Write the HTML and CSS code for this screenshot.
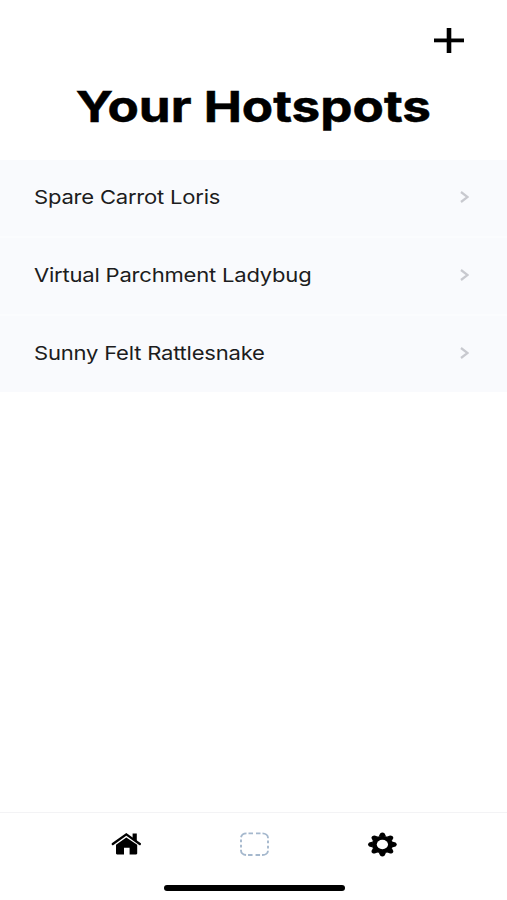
FILE: index.html
```html
<!DOCTYPE html>
<html lang="en">
<head>
<meta charset="utf-8">
<title>Your Hotspots</title>
<link rel="stylesheet" href="styles.css">
</head>
<body>
<div class="app">
  <header class="header">
    <button class="add" aria-label="Add hotspot">
      <svg width="30" height="25" viewBox="0 0 30 25"><path d="M15 0V25" stroke="#000" stroke-width="4.6"/><path d="M0 12.4H30" stroke="#000" stroke-width="3.8"/></svg>
    </button>
    <h1 class="title"><span>Your Hotspots</span></h1>
  </header>
  <main class="list">
    <a class="row"><span class="name">Spare Carrot Loris</span><svg class="chevron" viewBox="0 0 9 12"><path d="M1 1L7.6 6L1 11"/></svg></a>
    <a class="row"><span class="name">Virtual Parchment Ladybug</span><svg class="chevron" viewBox="0 0 9 12"><path d="M1 1L7.6 6L1 11"/></svg></a>
    <a class="row"><span class="name">Sunny Felt Rattlesnake</span><svg class="chevron" viewBox="0 0 9 12"><path d="M1 1L7.6 6L1 11"/></svg></a>
  </main>
  <footer class="footer">
    <nav class="tabs">
      <svg width="30" height="26" viewBox="0 0 30 26"><path d="M1.8 12L15.3 2.4L28.8 12" fill="none" stroke="#000" stroke-width="2.3" stroke-linecap="round"/><path d="M21.6 1.4H25.8V10L21.6 7ZM5 12.8L15.3 5.4L26.2 12.8V21.6Q26.2 22.4 25.2 22.4H18.6V15.8H13V22.4H6Q5 22.4 5 21.6Z"/></svg>
      <svg width="30" height="26" viewBox="0 0 30 26"><rect x="2" y="1.4" width="27" height="21.6" rx="5.5" ry="4.5" fill="none" stroke="#a5b8cd" stroke-width="1.9" stroke-dasharray="4.5 3 4.5 2 7.9 2.3 2.8 2.4 2.8 2.3 7.9 2" stroke-dashoffset="-2"/></svg>
      <svg width="30" height="26" viewBox="-15.4 -12.5 30 26"><g transform="scale(1.2 1)"><circle r="8.7"/><path id="tooth" d="M-3.1 -8L-1.9 -11Q0 -12.9 1.9 -11L3.1 -8Z"/><use href="#tooth" transform="rotate(45)"/><use href="#tooth" transform="rotate(90)"/><use href="#tooth" transform="rotate(135)"/><use href="#tooth" transform="rotate(180)"/><use href="#tooth" transform="rotate(225)"/><use href="#tooth" transform="rotate(270)"/><use href="#tooth" transform="rotate(315)"/><circle r="4.7" fill="#fff"/></g></svg>
    </nav>
    <div class="home-bar"></div>
  </footer>
</div>
</body>
</html>
```
FILE: styles.css
```css
* { box-sizing: border-box; }
body { margin: 0; background: #fff; color: #000; font-family: Inter, "Liberation Sans", sans-serif; }
.app { width: 507px; height: 900px; display: flex; flex-direction: column; overflow: hidden; }
svg { display: block; }
.header { height: 160px; padding-top: 28px; }
.add { display: block; margin: 0 43px 0 auto; padding: 0; border: 0; background: none; }
.title { margin: 27px 0 0; font-size: 43px; line-height: 52px; font-weight: 700; text-align: center; white-space: nowrap; }
.title span { display: inline-block; transform: scaleX(1.19); -webkit-text-stroke: 0.5px #000; }
.list { height: 232px; display: grid; grid-template-rows: 76px 76px 76px; row-gap: 2px; background: #fbfcfe; }
.row { display: flex; align-items: center; justify-content: space-between; padding: 0 38px 0 33.5px; background: #f9fafd; }
.name { font-size: 19px; line-height: 24px; letter-spacing: -0.18px; color: #1c1c20; white-space: nowrap; transform: scaleX(1.159); transform-origin: left; }
.chevron { width: 9px; height: 12px; margin-top: -2px; fill: none; stroke: #c8c9cf; stroke-width: 2.2; }
.footer { margin-top: auto; height: 88px; border-top: 1px solid #f3f3f5; }
.tabs { display: flex; justify-content: space-between; width: 286px; margin: 19px 0 0 111px; }
.home-bar { width: 181px; height: 6px; margin: 27px 0 0 164px; border-radius: 3px; background: #000; }
```
